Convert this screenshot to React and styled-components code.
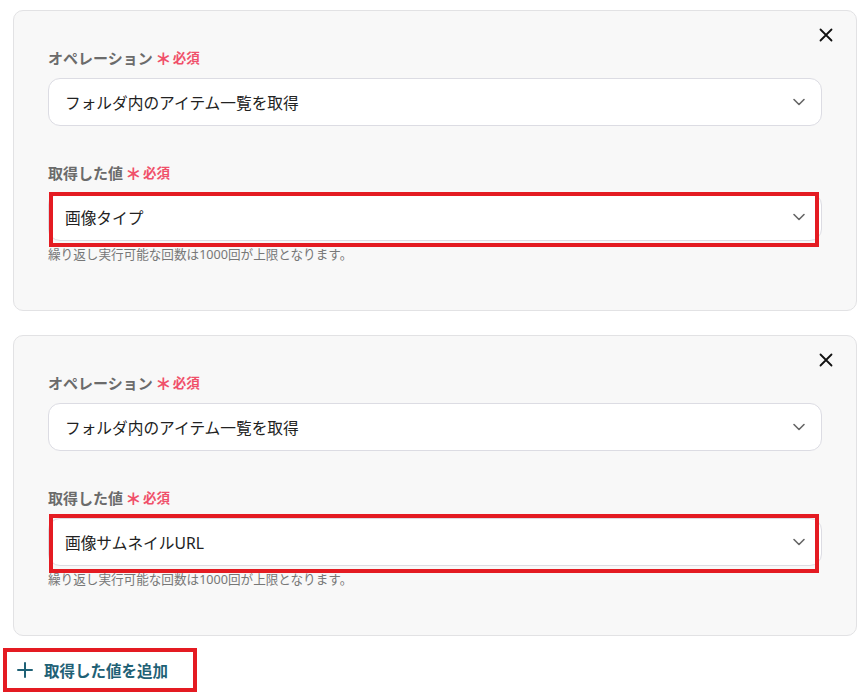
import React from "react";
import styled, { createGlobalStyle } from "styled-components";

const Global = createGlobalStyle`
  html, body { margin: 0; padding: 0; background: #ffffff; }
  body { font-family: "Noto Sans", "Noto Sans CJK JP", sans-serif; }
  * { box-sizing: border-box; }
`;

const Page = styled.div`
  display: flex;
  flex-direction: column;
  gap: 24px;
  padding: 10px 9px 0 13px;
  width: 866px;
`;

const Card = styled.section`
  background: #f8f8f8;
  border: 1px solid #e2e2e4;
  border-radius: 10px;
  padding: 12px 34px 46px 34px;
  display: flex;
  flex-direction: column;
`;

const CloseRow = styled.div`
  display: flex;
  justify-content: flex-end;
  height: 24px;
`;

const CloseButton = styled.button`
  width: 24px;
  height: 24px;
  margin-right: -16px;
  border: none;
  background: transparent;
  padding: 0;
  display: flex;
  align-items: center;
  justify-content: center;
  cursor: pointer;
`;

const Field = styled.div`
  display: flex;
  flex-direction: column;
  margin-top: ${(p) => (p.$first ? "0" : "36px")};
`;

const Label = styled.div`
  display: flex;
  align-items: center;
  gap: 2px;
  height: 20px;
  font-size: 15px;
  font-weight: 700;
  color: #6b6b6b;
  margin-bottom: 11px;
`;

const Required = styled.span`
  display: inline-flex;
  align-items: center;
  gap: 1px;
  font-size: 13.5px;
  font-weight: 700;
  color: #f0506a;
`;

const Star = styled.span`
  font-size: 20px;
  font-weight: 400;
  line-height: 20px;
  height: 20px;
  display: inline-block;
  position: relative;
  top: 1px;
`;

const SelectWrap = styled.div`
  position: relative;
`;

const Select = styled.div`
  height: 48px;
  background: #ffffff;
  border: 1px solid #dcdce3;
  border-radius: 12px;
  display: flex;
  align-items: center;
  justify-content: space-between;
  padding: 0 15px 0 16px;
  font-size: 15.7px;
  color: #222222;
`;

const Highlight = styled.div`
  position: absolute;
  border: 4px solid #e41b22;
  pointer-events: none;
  top: ${(p) => p.$top}px;
  left: ${(p) => p.$left}px;
  right: ${(p) => p.$right}px;
  bottom: ${(p) => p.$bottom}px;
`;

const Help = styled.div`
  margin-top: 5px;
  font-size: 12.6px;
  line-height: 18px;
  color: #777777;
`;

const AddWrap = styled.div`
  position: relative;
  align-self: flex-start;
  margin-top: -12px;
`;

const AddButton = styled.button`
  display: flex;
  align-items: center;
  gap: 11px;
  height: 44px;
  padding: 0 0 0 4px;
  border: none;
  background: transparent;
  font-family: inherit;
  font-size: 15.5px;
  font-weight: 700;
  color: #1f6176;
  cursor: pointer;
`;

const Chevron = () => (
  <svg width="14" height="14" viewBox="0 0 14 14" fill="none">
    <path d="M2 4.5 L7 9.5 L12 4.5" stroke="#666" strokeWidth="1.6" strokeLinecap="round" strokeLinejoin="round" />
  </svg>
);

const XIcon = () => (
  <svg width="14" height="14" viewBox="0 0 14 14" fill="none">
    <path d="M1.5 1.5 L12.5 12.5 M12.5 1.5 L1.5 12.5" stroke="#111" strokeWidth="1.8" strokeLinecap="round" />
  </svg>
);

const PlusIcon = () => (
  <svg width="16" height="16" viewBox="0 0 16 16" fill="none">
    <path d="M8 1 V15 M1 8 H15" stroke="#1f6176" strokeWidth="2" strokeLinecap="round" />
  </svg>
);

const HELP = "繰り返し実行可能な回数は1000回が上限となります。";

const LoopCard = ({ value, hl }) => (
  <Card>
    <CloseRow>
      <CloseButton aria-label="閉じる">
        <XIcon />
      </CloseButton>
    </CloseRow>
    <Field $first>
      <Label>
        オペレーション
        <Required>
          <Star>∗</Star>必須
        </Required>
      </Label>
      <Select>
        フォルダ内のアイテム一覧を取得
        <Chevron />
      </Select>
    </Field>
    <Field>
      <Label>
        取得した値
        <Required>
          <Star>∗</Star>必須
        </Required>
      </Label>
      <SelectWrap>
        <Select>
          {value}
          <Chevron />
        </Select>
        <Highlight $top={hl[0]} $left={1} $right={3} $bottom={hl[1]} />
      </SelectWrap>
      <Help>{HELP}</Help>
    </Field>
  </Card>
);

export default function App() {
  return (
    <>
      <Global />
      <Page>
        <LoopCard value="画像タイプ" hl={[-1, -6]} />
        <LoopCard value="画像サムネイルURL" hl={[-4, -7]} />
        <AddWrap>
          <AddButton>
            <PlusIcon />
            取得した値を追加
          </AddButton>
          <Highlight $top={0} $left={-10} $right={-29} $bottom={0} />
        </AddWrap>
      </Page>
    </>
  );
}
